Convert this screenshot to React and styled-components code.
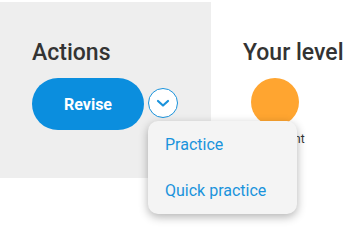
import React from "react";
import styled, { createGlobalStyle } from "styled-components";

const GlobalStyle = createGlobalStyle`
  html, body, #root {
    height: 100%;
  }
  body {
    margin: 0;
    background: #fff;
    font-family: Roboto, "Liberation Sans", Arial, sans-serif;
  }
`;

const Page = styled.div`
  display: flex;
  align-items: flex-start;
  box-sizing: border-box;
  min-height: 100%;
  padding-top: 2px;
`;

const ActionsPanel = styled.section`
  box-sizing: border-box;
  width: 211px;
  height: 176px;
  background: #eeeeee;
  padding: 37px 0 0 32px;
`;

const LevelPanel = styled.section`
  padding: 37px 0 0 32px;
`;

const Heading = styled.h2`
  margin: 0;
  font-size: 23px;
  line-height: 28px;
  font-weight: 500;
  color: #333;
  white-space: nowrap;
`;

const ButtonRow = styled.div`
  position: relative;
  z-index: 2;
  display: flex;
  align-items: center;
  gap: 4px;
  margin-top: 11px;
`;

const ReviseButton = styled.button`
  width: 112px;
  height: 52px;
  border: none;
  border-radius: 26px;
  background: #0b8ede;
  color: #fff;
  font-family: inherit;
  font-size: 16px;
  font-weight: 700;
  cursor: pointer;
`;

const ToggleButton = styled.button`
  box-sizing: border-box;
  width: 30px;
  height: 30px;
  padding: 0;
  border: 1px solid #1a93dc;
  border-radius: 50%;
  background: #fff;
  display: flex;
  align-items: center;
  justify-content: center;
  margin-top: -3px;
`;

const Menu = styled.ul`
  position: absolute;
  left: 116px;
  top: 43px;
  width: 149px;
  margin: 0;
  padding: 1px 0 0;
  list-style: none;
  background: #f4f4f4;
  border-radius: 10px;
  box-shadow: 0 3px 10px rgba(0, 0, 0, 0.3);
`;

const MenuItem = styled.li`
  height: 46px;
  line-height: 46px;
  padding-left: 17px;
  font-size: 16px;
  color: #1a93dc;
  white-space: nowrap;
`;

const LevelBadge = styled.div`
  width: 64px;
  display: flex;
  flex-direction: column;
  align-items: center;
  margin-top: 11px;
`;

const LevelDot = styled.div`
  width: 48px;
  height: 48px;
  border-radius: 50%;
  background: ${(p) => p.color};
`;

const LevelLabel = styled.span`
  margin-top: 6px;
  font-size: 12px;
  line-height: 14px;
  color: #333;
  white-space: nowrap;
`;

function Chevron() {
  return (
    <svg width="14" height="14" viewBox="0 0 14 14" fill="none">
      <path d="M2 5l5 4.5L12 5" stroke="#1a93dc" strokeWidth="2.2" strokeLinecap="round" strokeLinejoin="round" />
    </svg>
  );
}

export default function App() {
  return (
    <>
      <GlobalStyle />
      <Page>
        <ActionsPanel>
          <Heading>Actions</Heading>
          <ButtonRow>
            <ReviseButton>Revise</ReviseButton>
            <ToggleButton aria-label="More actions">
              <Chevron />
            </ToggleButton>
            <Menu>
              <MenuItem>Practice</MenuItem>
              <MenuItem>Quick practice</MenuItem>
            </Menu>
          </ButtonRow>
        </ActionsPanel>
        <LevelPanel>
          <Heading>Your level</Heading>
          <LevelBadge>
            <LevelDot color="#ffa530" />
            <LevelLabel>Competent</LevelLabel>
          </LevelBadge>
        </LevelPanel>
      </Page>
    </>
  );
}
